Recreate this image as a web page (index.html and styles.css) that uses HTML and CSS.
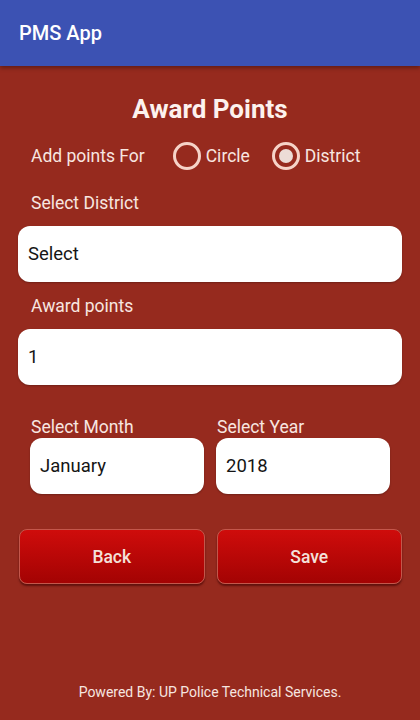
FILE: index.html
```html
<!DOCTYPE html>
<html>
<head>
<meta charset="utf-8">
<link rel="stylesheet" href="styles.css">
</head>
<body>
<div class="app">
  <header class="appbar">PMS App</header>
  <main class="page">
    <h1 class="title">Award Points</h1>
    <div class="radio-row">
      <span class="radio-label">Add points For</span>
      <label class="radio"><span class="dot"></span>Circle</label>
      <label class="radio checked"><span class="dot"></span>District</label>
    </div>
    <div class="label first">Select District</div>
    <div class="box">Select</div>
    <div class="label">Award points</div>
    <div class="box">1</div>
    <div class="pair">
      <div class="col">
        <div class="label small">Select Month</div>
        <div class="box">January</div>
      </div>
      <div class="col">
        <div class="label small">Select Year</div>
        <div class="box">2018</div>
      </div>
    </div>
    <div class="buttons">
      <button class="btn">Back</button>
      <button class="btn">Save</button>
    </div>
  </main>
  <footer class="footer">Powered By: UP Police Technical Services.</footer>
</div>
</body>
</html>
```
FILE: styles.css
```css
* { box-sizing: border-box; }
html, body { margin: 0; padding: 0; }
body {
  font-family: Roboto, "Liberation Sans", sans-serif;
  background: #962a1e;
  color: #f8e6e0;
}
.app {
  height: 720px;
  display: flex;
  flex-direction: column;
}
.appbar {
  height: 66px;
  background: #3c52b3;
  color: #fff;
  font-size: 20px;
  font-weight: 500;
  line-height: 66px;
  padding-left: 19px;
  box-shadow: 0 2px 4px rgba(0,0,0,0.35);
  position: relative;
  z-index: 1;
}
.page {
  padding: 0 18px;
  display: flex;
  flex-direction: column;
}
.title {
  margin: 27px 0 0;
  font-size: 26px;
  line-height: 32px;
  font-weight: 700;
  text-align: center;
  color: #fdf2ee;
}
.radio-row {
  margin-top: 15px;
  height: 32px;
  display: flex;
  align-items: center;
  padding-left: 13px;
  font-size: 17.5px;
}
.radio-label { margin-right: 28px; }
.radio {
  display: flex;
  align-items: center;
  margin-right: 22px;
}
.dot {
  width: 28px;
  height: 28px;
  border: 3px solid #f6d3c8;
  border-radius: 50%;
  margin-right: 5px;
  display: flex;
  align-items: center;
  justify-content: center;
}
.checked .dot::after {
  content: "";
  width: 14px;
  height: 14px;
  border-radius: 50%;
  background: #ecdcd6;
}
.label {
  font-size: 17.5px;
  line-height: 22px;
  padding-left: 13px;
  margin-top: 13px;
  margin-bottom: 12px;
}
.label.first { margin-top: 20px; }
.label.small {
  padding-left: 1px;
  margin: 0;
}
.box {
  height: 56px;
  background: #fff;
  border-radius: 12px;
  color: #151515;
  font-size: 18.5px;
  line-height: 56px;
  padding-left: 10px;
  box-shadow: 0 1px 2px rgba(0,0,0,0.25);
}
.pair {
  margin-top: 31px;
  padding: 0 12px;
  display: grid;
  grid-template-columns: 1fr 1fr;
  gap: 12px;
}
.buttons {
  margin-top: 35px;
  padding-left: 1px;
  display: grid;
  grid-template-columns: 1fr 1fr;
  gap: 12px;
}
.btn {
  height: 55px;
  border: 1px solid #c4574b;
  border-radius: 8px;
  background: linear-gradient(#cf0c0b, #a30303);
  color: #f4e1da;
  font-family: Roboto, "Liberation Sans", sans-serif;
  font-size: 17.5px;
  font-weight: 500;
  box-shadow: 0 2px 2px rgba(60,0,0,0.6);
}
.footer {
  margin-top: auto;
  text-align: center;
  font-size: 14px;
  line-height: 20px;
  padding-bottom: 18px;
  color: #f6e6e0;
}
```
